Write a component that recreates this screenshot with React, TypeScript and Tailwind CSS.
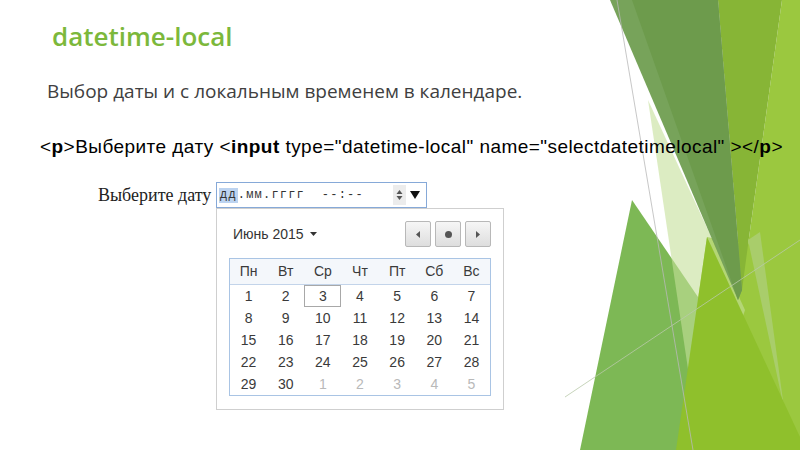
import React from "react";

const days: { d: number; muted?: boolean; sel?: boolean }[] = [];
for (let i = 1; i <= 30; i++) days.push({ d: i, sel: i === 3 });
for (let i = 1; i <= 5; i++) days.push({ d: i, muted: true });

const heads = ["Пн", "Вт", "Ср", "Чт", "Пт", "Сб", "Вс"];

function Decor() {
  return (
    <svg
      className="absolute inset-0"
      width={800}
      height={450}
      viewBox="0 0 800 450"
    >
      <polygon points="782,0 800,0 800,450 676,450 707,237 748,245" fill="#9bc83f" />
      <polygon points="718,0 782,0 748,245 742,290" fill="#87b536" />
      <polygon points="632,200 580,450 802,450" fill="#7db855" />
      <polygon points="648,100 745,310 700,450" fill="#c4e09a" fillOpacity="0.6" />
      <polygon points="610,0 718,0 742,290 738,300" fill="#77a35a" />
      <polygon points="632,0 718,0 742,290 738,300" fill="#6d9b4c" />
      <polygon points="748,240 760,232 784,408" fill="#a9cd6b" />
      <polygon points="707,237 676,450 800,450 800,437" fill="#8fc02c" />
      <line x1="617" y1="0" x2="693" y2="450" stroke="#b9b9b9" strokeWidth="0.8" />
      <line x1="565" y1="397" x2="800" y2="240" stroke="#b9c9a9" strokeWidth="0.8" />
    </svg>
  );
}

function NavButton({ children }: { children: React.ReactNode }) {
  return (
    <div className="flex h-[26px] w-[26px] items-center justify-center rounded-[2px] border border-[#b8b8b8] bg-gradient-to-b from-[#f6f6f6] to-[#dedede]">
      {children}
    </div>
  );
}

export default function App() {
  return (
    <div className="relative h-[450px] w-[800px] overflow-hidden bg-white">
      <Decor />
      <div className="relative">
        <h1 className="pl-[52px] pt-[21px] font-['Open_Sans',sans-serif] text-[26px] font-semibold leading-[30px] text-[#7cb83b]">
          datetime-local
        </h1>
        <p className="mt-[28px] pl-[47px] font-['Open_Sans',sans-serif] text-[19px] leading-[24px] text-[#404040]">
          Выбор даты и с локальным временем в календаре.
        </p>
        <p className="mt-[33px] whitespace-nowrap pl-[40px] font-['Liberation_Sans',Arial,sans-serif] text-[19px] leading-[22px] tracking-[0.45px] text-black">
          &lt;<b>p</b>&gt;Выберите дату &lt;<b>input</b> type="datetime-local"
          name="selectdatetimelocal" &gt;&lt;/<b>p</b>&gt;
        </p>
        <div className="mt-[24px] flex items-start pl-[98px]">
          <span className="mt-[3px] w-[118px] whitespace-nowrap font-['Liberation_Serif',serif] text-[18px] leading-[20px] text-[#222]">
            Выберите дату
          </span>
          <div className="flex flex-col">
            <div className="flex h-[26px] w-[211px] items-center border border-[#86a9d8] bg-white pl-[2px] pr-[6px] font-['Liberation_Mono',monospace] text-[12px] tracking-[1.2px] text-[#333]">
              <span className="bg-[#bcd3f0] px-[1px] leading-[15px]">дд</span>
              <span className="whitespace-pre">.мм.гггг  --:--</span>
              <div className="ml-auto flex h-[20px] items-center bg-[#ececec] px-[3px]">
                <svg width="7" height="12" viewBox="0 0 7 12">
                  <polygon points="3.5,1 6.5,5 0.5,5" fill="#555" />
                  <polygon points="0.5,7 6.5,7 3.5,11" fill="#555" />
                </svg>
              </div>
              <svg className="ml-[4px]" width="10" height="8" viewBox="0 0 10 8">
                <polygon points="0,0 10,0 5,8" fill="#111" />
              </svg>
            </div>
            <div className="w-[288px] border border-[#cfcfcf] bg-white px-[12px] pb-[13px] pt-[12px]">
              <div className="flex items-center">
                <span className="ml-[4px] font-['Liberation_Sans',Arial,sans-serif] text-[14px] text-[#333]">
                  Июнь 2015
                </span>
                <svg className="ml-[6px]" width="7" height="4" viewBox="0 0 7 4">
                  <polygon points="0,0 7,0 3.5,4" fill="#333" />
                </svg>
                <div className="ml-auto flex gap-[4px]">
                  <NavButton>
                    <svg width="4" height="7" viewBox="0 0 4 7">
                      <polygon points="4,0 4,7 0,3.5" fill="#555" />
                    </svg>
                  </NavButton>
                  <NavButton>
                    <div className="h-[7px] w-[7px] rounded-full bg-[#555]" />
                  </NavButton>
                  <NavButton>
                    <svg width="4" height="7" viewBox="0 0 4 7">
                      <polygon points="0,0 4,3.5 0,7" fill="#555" />
                    </svg>
                  </NavButton>
                </div>
              </div>
              <div className="mt-[11px] border border-[#a9c4e4] font-['Liberation_Sans',Arial,sans-serif] text-[14px] text-[#3a3a3a]">
                <div className="grid h-[26px] grid-cols-7 items-center border-b border-[#c3d4ea] bg-[#f4f7fb]">
                  {heads.map((h) => (
                    <div key={h} className="text-center">
                      {h}
                    </div>
                  ))}
                </div>
                <div className="grid grid-cols-7">
                  {days.map((x, i) => (
                    <div
                      key={i}
                      className={
                        "flex h-[22px] items-center justify-center " +
                        (x.sel ? "border border-[#a8a8a8] " : "") +
                        (x.muted ? "text-[#b9b9b9]" : "")
                      }
                    >
                      {x.d}
                    </div>
                  ))}
                </div>
              </div>
            </div>
          </div>
        </div>
      </div>
    </div>
  );
}
